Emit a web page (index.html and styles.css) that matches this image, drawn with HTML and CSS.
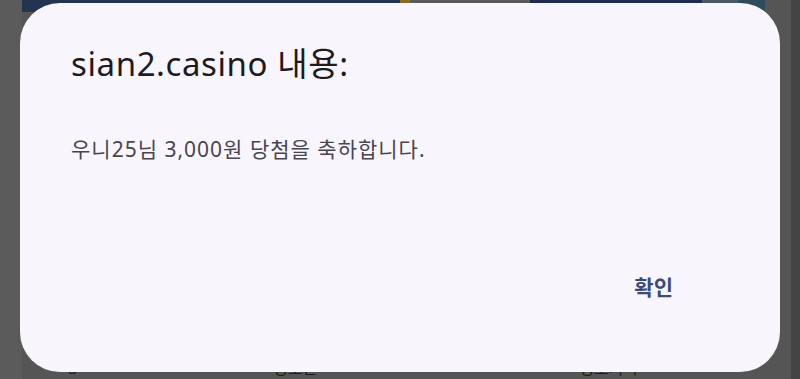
FILE: index.html
```html
<!DOCTYPE html>
<html lang="ko">
<head>
<meta charset="utf-8">
<link rel="stylesheet" href="styles.css">
</head>
<body>
<div class="backdrop">
  <div class="page">
    <div class="banner">
      <span class="b b-navy1"></span>
      <span class="b b-gold"></span>
      <span class="b b-gray"></span>
      <span class="b b-navy2"></span>
      <span class="b b-gray2"></span>
      <span class="b b-teal"></span>
    </div>
    <div class="page-body"></div>
    <div class="footer">
      <span class="f f1">a</span>
      <span class="f f2">정보관</span>
      <span class="f f3">정보기록</span>
    </div>
  </div>
  <div class="scroll"></div>
</div>
<div class="dialog">
  <h1 class="title">sian2.casino 내용:</h1>
  <p class="message">우니25님 3,000원 당첨을 축하합니다.</p>
  <div class="actions">
    <button class="btn">확인</button>
  </div>
</div>
</body>
</html>
```
FILE: styles.css
```css
html, body {
  margin: 0;
  padding: 0;
  width: 800px;
  height: 379px;
  overflow: hidden;
  background: #585858;
}
.backdrop {
  display: flex;
  height: 379px;
  background: #5b5b5b;
}
.page {
  flex: 1;
  display: flex;
  flex-direction: column;
  margin-left: 22px;
  background: #555555;
}
.banner {
  display: flex;
  height: 12px;
}
.b { display: block; height: 100%; }
.b-navy1 { width: 378px; background: #22344f; }
.b-gold { width: 10px; background: #8a6a1e; }
.b-gray { width: 120px; background: #5a5a5a; }
.b-navy2 { width: 172px; background: #1e2c4d; }
.b-gray2 { width: 36px; background: #4c5a66; }
.b-teal { width: 27px; background: #2f4c5c; }
.page-body { flex: 1; }
.footer {
  display: flex;
  height: 14px;
  font-family: "Noto Sans", "Noto Sans CJK KR", sans-serif;
  font-size: 16px;
  color: #1a1a1a;
  line-height: 14px;
  align-items: flex-start;
}
.f { display: block; transform: translateY(-4px); }
.f1 { margin-left: 46px; }
.f2 { margin-left: 196px; }
.f3 { margin-left: 262px; }
.scroll {
  width: 9px;
  background: #444444;
}
.dialog {
  position: absolute;
  left: 20px;
  top: 3px;
  width: 760px;
  height: 369px;
  box-sizing: border-box;
  border-radius: 40px;
  background: #f8f5fc;
  padding: 39px 51px 0 51px;
  display: flex;
  flex-direction: column;
  font-family: "Noto Sans", "Noto Sans CJK KR", sans-serif;
}
.title {
  margin: 0;
  font-size: 33px;
  font-weight: 400;
  line-height: 44px;
  color: #1d1b20;
  letter-spacing: 0.6px;
}
.message {
  margin: 49px 0 0 0;
  font-size: 21px;
  line-height: 28px;
  color: #49454f;
  letter-spacing: 1px;
}
.actions {
  display: flex;
  justify-content: flex-end;
  margin-top: 108px;
  padding-right: 56px;
}
.btn {
  font-family: "Noto Sans", "Noto Sans CJK KR", sans-serif;
  font-size: 21px;
  font-weight: 700;
  color: #3c4a7a;
  background: none;
  border: none;
  padding: 4px 0;
  line-height: 24px;
  letter-spacing: 0;
}
```
